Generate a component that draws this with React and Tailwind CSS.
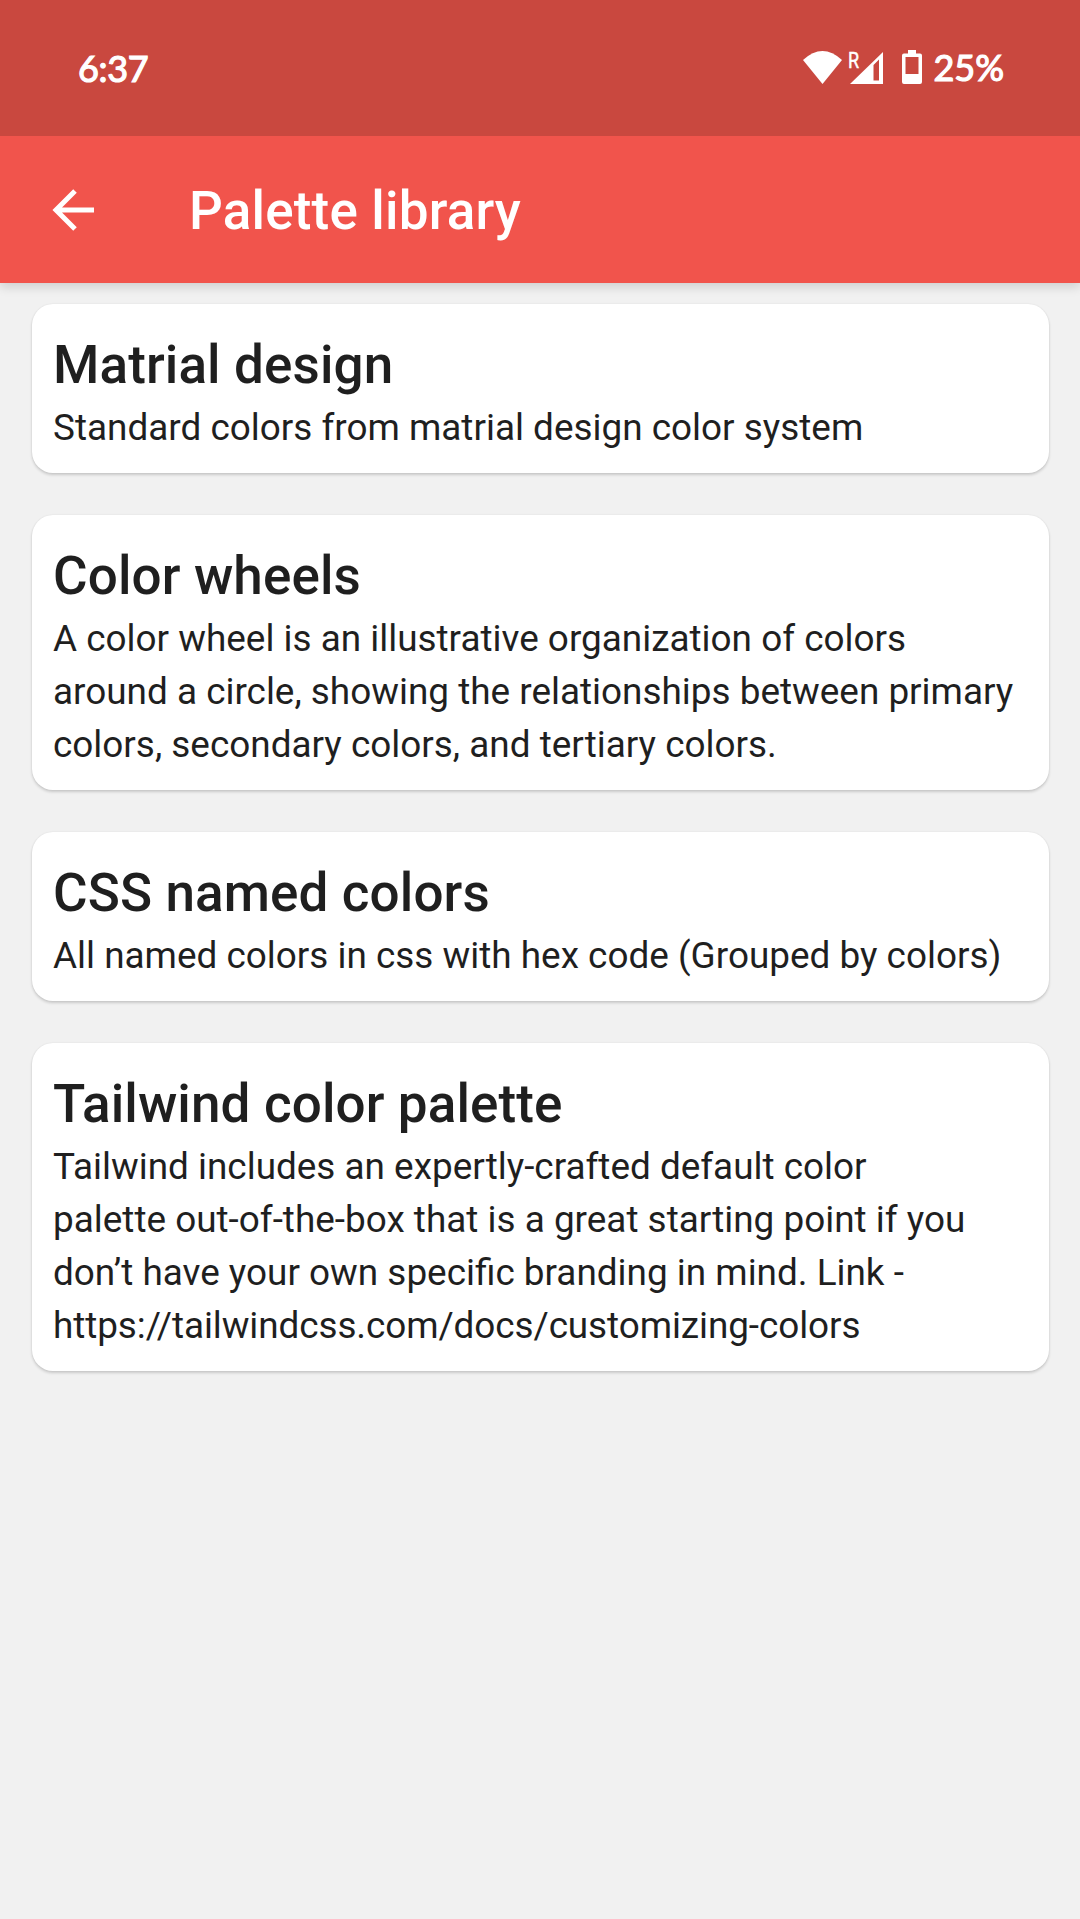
const items = [
  { title: "Matrial design", lines: ["Standard colors from matrial design color system"] },
  { title: "Color wheels", lines: ["A color wheel is an illustrative organization of colors", "around a circle, showing the relationships between primary", "colors, secondary colors, and tertiary colors."] },
  { title: "CSS named colors", lines: ["All named colors in css with hex code (Grouped by colors)"] },
  { title: "Tailwind color palette", lines: ["Tailwind includes an expertly-crafted default color", "palette out-of-the-box that is a great starting point if you", "don’t have your own specific branding in mind. Link -", "https://tailwindcss.com/docs/customizing-colors"] },
];

function Status() {
  return (
    <div className="relative z-10 flex h-[136px] items-start justify-between bg-[#c9483f] pl-[78px] pr-[76px] pt-[30px] font-['Lato',sans-serif] text-[36px] font-normal leading-[44px] text-white [-webkit-text-stroke:1.2px_white]">
      <span className="mt-[16px] tracking-[-0.3px]">6:37</span>
      <div className="mt-[15px] flex items-start">
        <svg className="mt-[6px]" width="39" height="33" viewBox="0 0 39 33" fill="white"><path d="M0 9Q19.500 -9 39 9L19.500 33Z" /></svg>
        <div className="relative ml-[8px] mt-[6px] h-[33px] w-[33px]">
          <svg width="33" height="33" viewBox="0 0 33 33" fill="white"><path fillRule="evenodd" d="M33 1V33H0ZM29 8.500L23.500 14V29.500H29Z" /></svg>
          <span className="absolute left-[-2px] top-[-2px] origin-left scale-x-[0.8] font-['Roboto',sans-serif] text-[22.5px] font-normal leading-[22px] [-webkit-text-stroke:0.5px_white]">R</span>
        </div>
        <svg className="ml-[19px] mt-[5px]" width="20" height="34" viewBox="0 0 20 34" fill="white"><path fillRule="evenodd" d="M6 0h8v3.500h4a2 2 0 0 1 2 2V32a2 2 0 0 1-2 2H2a2 2 0 0 1-2-2V5.500a2 2 0 0 1 2-2h4ZM3.500 7v17h13V7Z" /></svg>
        <span className="ml-[11px]">25%</span>
      </div>
    </div>
  );
}

export default function App() {
  return (
    <div className="min-h-[1919px] w-[1080px] bg-[#f1f1f1] font-['Roboto',sans-serif] text-[#1f1f1f]">
      <Status />
      <header className="flex h-[147px] items-center bg-[#f1544c] pl-[52px] text-white shadow-[0_4px_10px_rgba(0,0,0,0.14)]">
        <svg width="42" height="42" viewBox="0 0 42 42" fill="none" stroke="white" strokeWidth="5"><path d="M42 21H4M23 2L4 21L23 40" /></svg>
        <h1 className="ml-[95px] mt-[5px] text-[53px] font-medium tracking-[0.18px]">Palette library</h1>
      </header>
      <main className="flex flex-col gap-[42px] pl-[32px] pr-[31px] pt-[21px]">
        {items.map((item) => (
          <section key={item.title} className="rounded-[21px] bg-white px-[21px] pb-[19px] pt-[25px] shadow-[0_2px_3px_rgba(0,0,0,0.16),0_0_2px_rgba(0,0,0,0.08)]">
            <h2 className="text-[53px] font-medium leading-[72px] tracking-[0.12px]">{item.title}</h2>
            {item.lines.map((line) => (
              <p key={line} className={line.startsWith("https") ? "whitespace-nowrap text-[36.9px] leading-[53px] tracking-[-0.08px]" : "whitespace-nowrap text-[36.9px] leading-[53px]"}>{line}</p>
            ))}
          </section>
        ))}
      </main>
    </div>
  );
}
